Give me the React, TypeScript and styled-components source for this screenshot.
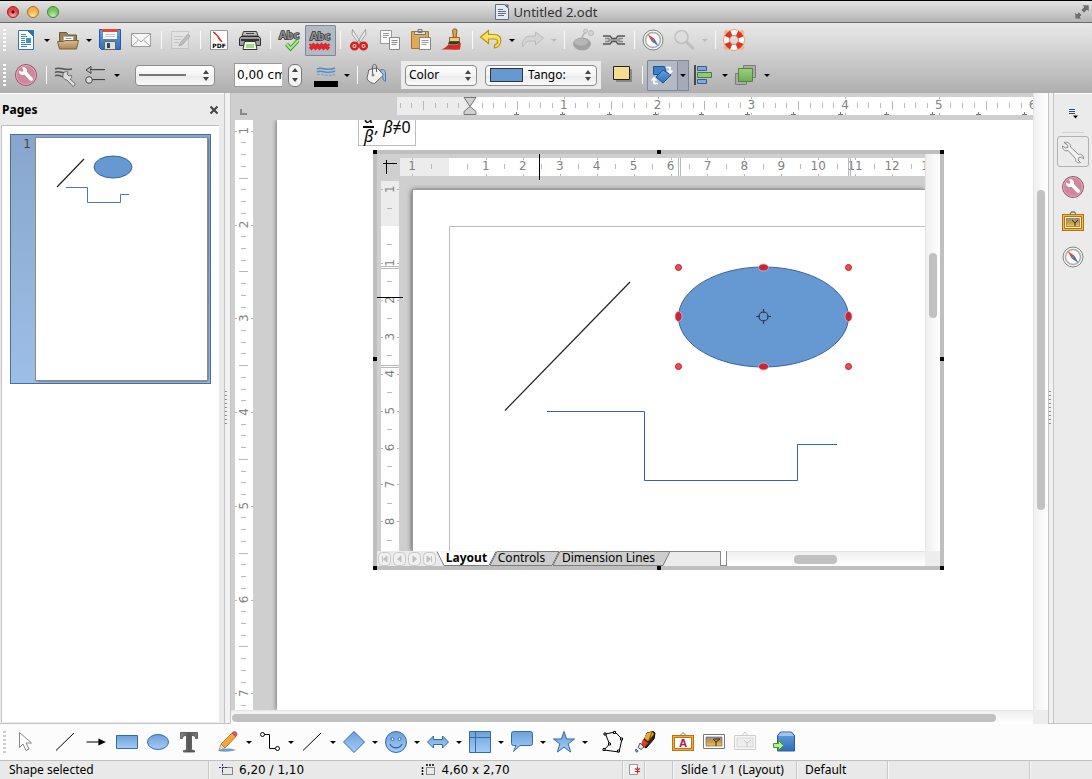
import React from 'react';
import styled, { createGlobalStyle, css } from 'styled-components';

const UI = '"Noto Sans", "Open Sans", sans-serif';
const NUM = '"DejaVu Sans", "Noto Sans", sans-serif';

const GlobalStyle = createGlobalStyle`
  * { box-sizing: border-box; }
  body { margin: 0; font-family: ${UI}; font-size: 12px; color: #000; background: #ebebeb; }
  button, input, select { font: inherit; color: inherit; margin: 0; }
`;

/* ---------- window frame ---------- */

const Window = styled.div`
  height: 100vh;
  display: flex;
  flex-direction: column;
  overflow: hidden;
`;

const TitleBar = styled.header`
  flex: none;
  height: 23px;
  display: grid;
  grid-template-columns: 1fr auto 1fr;
  align-items: center;
  padding: 0 3px;
  border-top: 1px solid #000;
  border-bottom: 1px solid #6a6a6a;
  background: linear-gradient(#e4e4e4, #b4b4b4);
`;

const Lights = styled.div`
  display: flex;
  gap: 8px;
  padding-left: 4px;
`;

const Light = styled.button<{ $tone: string; $edge: string; $dot?: boolean }>`
  width: 12px;
  height: 12px;
  padding: 0;
  border: 1px solid ${p => p.$edge};
  border-radius: 50%;
  background: ${p => (p.$dot ? 'radial-gradient(circle at 50% 50%, #400 0 1px, transparent 2px), ' : '')}
    radial-gradient(circle at 50% 90%, #fff9 0, transparent 60%), ${p => p.$tone};
`;

const Title = styled.h1`
  display: flex;
  align-items: center;
  gap: 5px;
  margin: 0;
  font-size: 13px;
  line-height: 20px;
  font-weight: 400;
  color: #333;
`;

const Expand = styled.button`
  justify-self: end;
  width: 14px;
  height: 14px;
  padding: 0;
  border: 0;
  background: none;
  display: flex;
`;

const Toolbars = styled.div`
  flex: none;
  background: linear-gradient(#e9e9e9, #afafaf);
`;

const Row = styled.div<{ $height: number }>`
  height: ${p => p.$height}px;
  display: flex;
  align-items: center;
`;

const Grip = styled.span<{ $tone?: string }>`
  flex: none;
  width: 3px;
  height: 22px;
  margin: 0 5px 0 3px;
  background: repeating-linear-gradient(${p => p.$tone ?? '#fff'} 0 2px, transparent 2px 4px);
`;

const Tool = styled.button<{ $pressed?: boolean }>`
  flex: none;
  width: 31px;
  height: 31px;
  padding: 0 1px 0 0;
  border: 1px solid ${p => (p.$pressed ? '#7d8797' : 'transparent')};
  border-radius: 1px;
  background: ${p => (p.$pressed ? '#b3bac6' : 'none')};
  display: flex;
  align-items: center;
  justify-content: center;
`;

const Drop = styled.button<{ $pressed?: boolean; $faded?: boolean }>`
  flex: none;
  width: 11px;
  height: 31px;
  padding: 0;
  border: 1px solid ${p => (p.$pressed ? '#7d8797' : 'transparent')};
  border-left: 0;
  background: ${p => (p.$pressed ? '#a3abba' : 'none')};
  display: flex;
  align-items: center;
  justify-content: center;
  &::after {
    content: '';
    border: 3px solid transparent;
    border-top-color: ${p => (p.$faded ? '#bbb' : '#000')};
    border-bottom: 0;
  }
`;

const Sep = styled.span`
  flex: none;
  width: 8px;
  height: 18px;
  display: flex;
  justify-content: center;
  &::before { content: ''; width: 1px; background: #fafafa; }
`;

const Gap = styled.span<{ $size: number }>`
  flex: none;
  width: ${p => p.$size}px;
`;

const SelectWrap = styled.span<{ $width: number }>`
  position: relative;
  flex: none;
  width: ${p => p.$width}px;
  height: 21px;
  display: flex;
  &::before, &::after {
    content: '';
    position: absolute;
    right: 6px;
    border: 3px solid transparent;
    pointer-events: none;
  }
  &::before { top: 5px; border-bottom: 4px solid #444; border-top: 0; }
  &::after { bottom: 5px; border-top: 4px solid #444; border-bottom: 0; }
`;

const Select = styled.select<{ $indent?: number }>`
  appearance: none;
  width: 100%;
  height: 100%;
  padding: 0 16px 0 ${p => p.$indent ?? 3}px;
  border: 1px solid #8c8c8c;
  border-radius: 4px;
  background: linear-gradient(#fff, #f3f3f3 50%, #e9e9e9 50%, #fafafa);
  font-size: 12px;
  line-height: 16px;
`;

const LinePreview = styled.i`
  position: absolute;
  left: 4px;
  top: 9px;
  width: 47px;
  height: 2px;
  background: #777;
  pointer-events: none;
`;

const Swatch = styled.i`
  position: absolute;
  left: 5px;
  top: 3px;
  width: 33px;
  height: 14px;
  border: 1px solid #333;
  background: #6499d1;
  pointer-events: none;
`;

const WidthInput = styled.input`
  flex: none;
  width: 48px;
  height: 24px;
  padding: 0 0 0 2px;
  border: 1px solid #9a9a9a;
  border-right: 0;
  border-radius: 0;
  background: #fff;
  font-family: ${NUM};
`;

const Stepper = styled.span`
  flex: none;
  width: 14px;
  height: 23px;
  margin-left: 6px;
  border: 1px solid #777;
  border-radius: 6px;
  background: #f4f4f4;
  display: flex;
  flex-direction: column;
`;

const Step = styled.button<{ $down?: boolean }>`
  flex: 1;
  padding: 0;
  border: 0;
  background: none;
  display: flex;
  align-items: center;
  justify-content: center;
  &::after {
    content: '';
    border: 3px solid transparent;
    ${p => (p.$down
    ? css`border-top: 4px solid #444; border-bottom: 0;`
    : css`border-bottom: 4px solid #444; border-top: 0;`)}
  }
`;

const FillGroup = styled.span`
  flex: none;
  height: 28px;
  margin: 0 6px 0 9px;
  padding: 0 4px;
  display: flex;
  align-items: center;
  gap: 8px;
  background: #ebebeb;
`;

/* ---------- main area ---------- */

const Main = styled.main`
  flex: 1;
  min-height: 0;
  display: grid;
  grid-template-columns: 224px 7px minmax(0, 1fr) 6px 38px;
`;

const PagesPanel = styled.aside`
  display: flex;
  flex-direction: column;
  background: #ebebeb;
  border-top: 1px solid #fff;
  border-bottom: 1px solid #c4c4c4;
`;

const PanelHead = styled.div`
  display: flex;
  align-items: center;
  justify-content: space-between;
  height: 31px;
  padding: 0 5px 0 2px;
`;

const PanelTitle = styled.h2`
  margin: 0;
  font-size: 12px;
  line-height: 16px;
  font-weight: 700;
`;

const PanelClose = styled.button`
  width: 10px;
  height: 10px;
  padding: 0;
  border: 0;
  background: none;
  display: flex;
`;

const PageList = styled.div`
  flex: 1;
  margin: 0 5px 1px 1px;
  padding: 8px;
  border: solid #c0c0c0;
  border-width: 1px 0 0 1px;
  background: #fff;
`;

const PageItem = styled.button`
  width: 201px;
  height: 250px;
  padding: 3px 3px 3px 0;
  border: 1px solid #45709f;
  background: linear-gradient(#88a6cd, #9dbee7);
  display: grid;
  grid-template-columns: 25px 1fr;
  align-items: start;
  text-align: right;
`;

const PageNumber = styled.span`
  padding-right: 5px;
  font: 12px/12px ${NUM};
  color: #444;
`;

const Thumb = styled.svg`
  width: 100%;
  height: 242px;
  background: #fff;
  box-shadow: 0 0 0 1px #8b8b8b, 1px 1px 2px #333;
`;

const Splitter = styled.div`
  border: solid #c4c4c4;
  border-width: 0 1px 1px 1px;
  background: #f2f2f2;
  display: flex;
  align-items: center;
  &::after {
    content: '';
    width: 2px;
    height: 34px;
    background: repeating-linear-gradient(#888 0 1px, transparent 1px 4px);
  }
`;

const Editor = styled.section`
  display: grid;
  grid-template-columns: 22px minmax(0, 1fr) 15px;
  grid-template-rows: 27px minmax(0, 1fr) 14px;
  background: #cfcfcf;
`;

const Corner = styled.div`
  padding: 10px 0 0 9px;
`;

const TopRulerCell = styled.div`
  padding: 4px 0 0 144px;
`;

const SideRulerCell = styled.div`
  padding-left: 4px;
`;

const Strip = styled.div<{ $vertical?: boolean }>`
  position: relative;
  ${p => (p.$vertical ? 'width: 18px; height: 100%;' : 'height: 18px; width: 100%;')}
  background: #fff;
  overflow: hidden;
`;

const StripSvg = styled.svg`
  display: block;
  width: 100%;
  height: 100%;
`;

const ScrollV = styled.div`
  grid-column: 3;
  grid-row: 1 / 3;
  display: flex;
  flex-direction: column;
  padding: 0 3px;
  border-left: 1px solid #e4e4e4;
  background: linear-gradient(to right, #f0f0f0, #fff);
`;

const ScrollH = styled.div`
  display: flex;
  padding: 3px 0 2px;
  border-top: 1px solid #e4e4e4;
  background: linear-gradient(#f0f0f0, #fff);
`;

const EditorScrollH = styled(ScrollH)`
  grid-column: 1 / 3;
`;

const InnerScrollH = styled(ScrollH)`
  flex: 1;
`;

const Room = styled.span<{ $share: number }>`
  flex: ${p => p.$share} 1 0;
`;

const ThumbBar = styled(Room)`
  border-radius: 4px;
  background: #c1c1c1;
`;

const ScrollCorner = styled.div`
  background: #ededed;
`;

const Desk = styled.div`
  padding-left: 24px;
  overflow: hidden;
`;

const Paper = styled.article`
  position: relative;
  height: 100%;
  background: #fff;
  box-shadow: 0 0 5px #555;
`;

const Formula = styled.div`
  position: absolute;
  left: 81px;
  top: -12px;
  width: 58px;
  height: 38px;
  padding-left: 4px;
  display: flex;
  align-items: center;
  border: 1px solid #bcbcbc;
  font-size: 16px;
  line-height: 17px;
  font-style: italic;
`;

const Fraction = styled.span`
  display: flex;
  flex-direction: column;
  width: 11px;
  margin-right: 1px;
  text-align: center;
  & > :first-child { border-bottom: 2px solid #000; }
`;

const Upright = styled.span`
  font-style: normal;
`;

const Embedded = styled.div`
  position: absolute;
  left: 96px;
  top: 30px;
  width: 571px;
  height: 420px;
  border: 4px solid #bfbfbf;
  display: grid;
  grid-template-columns: 23px minmax(0, 1fr) 15px;
  grid-template-rows: 26px minmax(0, 1fr) 15px;
  background: #cfcfcf;
`;

const Knob = styled.i<{ $x: string; $y: string }>`
  position: absolute;
  width: 4px;
  height: 4px;
  background: #000;
  ${p => ({ start: 'left: -4px;', mid: 'left: calc(50% - 2px);', end: 'right: -4px;' } as Record<string, string>)[p.$x]}
  ${p => ({ start: 'top: -4px;', mid: 'top: calc(50% - 3px);', end: 'bottom: -4px;' } as Record<string, string>)[p.$y]}
`;

const InnerTop = styled.div`
  position: relative;
  padding-top: 4px;
`;

const InnerSide = styled.div`
  position: relative;
  padding: 1px 1px 0 4px;
`;

const Cursor = styled.i<{ $vertical?: boolean }>`
  position: absolute;
  background: #000;
  ${p => (p.$vertical
    ? 'left: 139px; top: 0; width: 1px; height: 26px;'
    : 'top: 117px; left: 0; height: 1px; width: 26px;')}
`;

const InnerDesk = styled.div`
  padding: 10px 0 0 13px;
  overflow: hidden;
`;

const InnerPage = styled.svg`
  display: block;
  width: 100%;
  height: 100%;
  background: #fff;
  box-shadow: 0 0 0 1px #9a9a9a, -1px 0 5px #444;
`;

const TabRow = styled.div`
  grid-column: 1 / 3;
  display: flex;
  background: #ebebeb;
`;

const NavButton = styled.button`
  flex: none;
  width: 15px;
  height: 15px;
  padding: 0;
  border: 0;
  background: none;
  display: flex;
`;

const Tab = styled.button<{ $width: number; $active?: boolean }>`
  position: relative;
  flex: none;
  width: ${p => p.$width}px;
  height: 15px;
  margin-left: ${p => (p.$active ? 0 : -6)}px;
  padding: 0 ${p => (p.$active ? 0 : 6)}px 2px 0;
  border: 0;
  background: none;
  line-height: 13px;
  white-space: nowrap;
  font-weight: ${p => (p.$active ? 700 : 400)};
  z-index: ${p => (p.$active ? 1 : 0)};
`;

const TabShape = styled.svg`
  position: absolute;
  inset: 0;
`;

const TabLabel = styled.span`
  position: relative;
`;

const TabFiller = styled.span`
  flex: none;
  width: 57px;
  margin-left: -6px;
  border: solid #888;
  border-width: 1px 1px 0 0;
`;

const TabSash = styled.span`
  flex: none;
  width: 6px;
  border: solid #888;
  border-width: 0 1px 1px 0;
  background: #fff;
`;

const SideBar = styled.nav`
  display: flex;
  flex-direction: column;
  align-items: center;
  gap: 4px;
  padding-top: 3px;
  background: #ebebeb;
  border-top: 1px solid #fff;
  border-bottom: 1px solid #c4c4c4;
`;

const SideRule = styled.hr`
  width: 22px;
  height: 1px;
  margin: 0 0 -1px;
  border: 0;
  background: #d0d0d0;
`;

const SideTool = styled(Tool)<{ $framed?: boolean }>`
  width: 32px;
  padding: 0;
  border-color: ${p => (p.$framed ? '#b0b0b0' : 'transparent')};
  border-radius: 3px;
`;

const DrawBar = styled(Row)`
  flex: none;
  background: #fcfcfc;
`;

const Status = styled.footer`
  flex: none;
  height: 19px;
  display: grid;
  grid-template-columns: 208px minmax(0, 1fr) 22px 28px 124px 91px 142px 63px;
  border-top: 1px solid #c0c0c0;
  background: #e9e9e9;
  line-height: 18px;
`;

const Cell = styled.div<{ $pad?: number }>`
  display: flex;
  align-items: center;
  padding-left: ${p => p.$pad ?? 8}px;
  border-left: 1px solid #c8c8c8;
  box-shadow: inset 1px 0 0 #f6f6f6;
  white-space: nowrap;
  &:first-child { border-left: 0; padding-left: 9px; box-shadow: none; }
`;

const Measures = styled(Cell)`
  display: grid;
  grid-template-columns: 1fr 1fr;
  font-family: ${NUM};
`;

const Measure = styled.span`
  display: flex;
  align-items: center;
  gap: 6px;
`;

/* ---------- drawings ---------- */

const DefsSvg = styled.svg`
  position: absolute;
`;

const Defs = () => (
  <DefsSvg width="0" height="0" aria-hidden="true">
    <defs>
      <linearGradient id="blue" x1="0" y1="0" x2="0" y2="1">
        <stop offset="0" stopColor="#6ba0dc" /><stop offset="1" stopColor="#a5cdf5" />
      </linearGradient>
      <linearGradient id="deep" x1="0" y1="0" x2="0" y2="1">
        <stop offset="0" stopColor="#63a0e0" /><stop offset="1" stopColor="#2e70b8" />
      </linearGradient>
      <linearGradient id="tan" x1="0" y1="0" x2="0" y2="1">
        <stop offset="0" stopColor="#d9be92" /><stop offset="1" stopColor="#a98752" />
      </linearGradient>
      <linearGradient id="green" x1="0" y1="0" x2="0" y2="1">
        <stop offset="0" stopColor="#9bd07c" /><stop offset="1" stopColor="#6fae50" />
      </linearGradient>
      <linearGradient id="sunset" x1="0" y1="0" x2="0" y2="1">
        <stop offset="0" stopColor="#8d959c" /><stop offset=".5" stopColor="#c39a50" /><stop offset="1" stopColor="#ffc03c" />
      </linearGradient>
      <linearGradient id="steel" x1="0" y1="0" x2="1" y2="0">
        <stop offset="0" stopColor="#8a8a8a" /><stop offset=".5" stopColor="#555" /><stop offset="1" stopColor="#7a7a7a" />
      </linearGradient>
    </defs>
  </DefsSvg>
);

const blueShape = { fill: 'url(#blue)', stroke: '#346ba6', strokeWidth: 1 };

const wrench = 'M5 7.5 L8.2 9 L9.6 7.6 L8 4.6 C10.5 3.6 13.6 5.4 13 9 L18.6 15 C20 16.6 17.8 19 16 17.6 L10.6 11.8 C7.2 12.8 4.4 10.6 5 7.5Z';

const compass = (
  <>
    <circle cx="12" cy="12" r="10" fill="#f4f4f4" stroke="#7e857f" />
    <circle cx="12" cy="12" r="7.500" fill="#fdfdfd" stroke="#a6ada7" strokeWidth="1.500" />
    <path d="M6.500 6L13.500 10.800 10.700 13.400z" fill="#e2453a" />
    <path d="M17.500 18L10.700 13.400 13.500 10.800z" fill="#4a71a8" />
  </>
);

const abc = (
  <text x="12" y="11" textAnchor="middle" fontFamily="Noto Sans" fontWeight="700" fontSize="11"
    fill="#8e8e8e" stroke="#2e2e2e" strokeWidth="1.500" paintOrder="stroke">Abc</text>
);

const icons: Record<string, React.ReactNode> = {
  writer: (
    <>
      <path d="M4.500 2.500h11l4 4v15h-15z" fill="#fff" stroke="#2c79a6" />
      <path d="M13.500 2.500h6v6z" fill="#2c79a6" stroke="#2c79a6" />
      <path d="M7 6.500h5M7 8.500h6M7 10.500h4M7 12.500h4M7 14.500h4M7 16.500h10M7 18.500h6" stroke="#3c8cba" fill="none" />
      <path d="M12 10h5v5h-5z" fill="#3b93c8" />
    </>
  ),
  open: (
    <>
      <path d="M3.500 19V4.500h7l2 2.500h8v12z" fill="#9b8158" stroke="#6e5731" />
      <path d="M7.500 8.500h10v7h-10z" fill="#fff" stroke="#aaa" />
      <path d="M9.500 10.500h6" stroke="#999" />
      <path d="M1.500 13.500h6l1.500-1h13.500l-2 8.500h-17z" fill="url(#tan)" stroke="#7c6237" />
    </>
  ),
  save: (
    <>
      <path d="M1.500 1.500h21v20h-19l-2-2z" fill="url(#deep)" stroke="#29589a" />
      <path d="M5 2h14v9H5z" fill="#fff" /><path d="M4 1h16v3H4z" fill="#e2493b" />
      <path d="M7 6.500h10M7 8.500h10" stroke="#c3c3c3" />
      <path d="M6.500 13.500h11v8h-11z" fill="#ddd" stroke="#666" /><path d="M9 15h3v5H9z" fill="#33475e" />
    </>
  ),
  mail: (
    <>
      <path d="M2.500 5.500h19v13h-19z" fill="#f7f7f7" stroke="#9a9a9a" />
      <path d="M3 6l9 8 9-8M3 18l6.500-6M21 18l-6.500-6" fill="none" stroke="#aaa" />
    </>
  ),
  edit: (
    <g opacity=".45">
      <path d="M3.500 3.500h17v17h-17z" fill="#e8e8e8" stroke="#aaa" />
      <path d="M6 8.500h9M6 11.500h7M6 14.500h5" stroke="#aaa" />
      <path d="M11 18l1.500-3.500L20 6l2 2-7.500 8.500z" fill="#999" stroke="#777" />
    </g>
  ),
  pdf: (
    <>
      <path d="M3.500 2.500h17v19h-17z" fill="#fff" stroke="#999" />
      <path d="M6 4c3 .5 5 4 9 9.500-3-1-3-2-4.500-5.500C9 7 7.500 5.500 6 4z" fill="#e8261c" stroke="#e8261c" />
      <text x="12" y="20" textAnchor="middle" fontFamily="DejaVu Sans" fontWeight="700" fontSize="6">PDF</text>
    </>
  ),
  print: (
    <>
      <path d="M5.500 3.500h13l1.500 4.500H4z" fill="#bdbdbd" stroke="#3a3a3a" />
      <path d="M8 5.500h8" stroke="#444" />
      <path d="M3 8.500h18l1.500 2v7h-21v-7z" fill="#9c9c9c" stroke="#2c2c2c" />
      <path d="M3 11h18v2H3z" fill="#333" />
      <path d="M6.500 13.500h11l1.500 8h-14z" fill="#eef7e8" stroke="#333" /><path d="M8 16h8v4H8z" fill="#a3d890" />
    </>
  ),
  spell: (
    <>
      {abc}
      <path d="M9.500 16l4 4.500 7.500-8" fill="none" stroke="#3c9a26" strokeWidth="4" />
      <path d="M9.500 16l4 4.500 7.500-8" fill="none" stroke="#a6ec85" strokeWidth="2" />
    </>
  ),
  autospell: (
    <g transform="translate(0 1)">
      {abc}
      <path d="M1.500 15l2 2 2-2 2 2 2-2 2 2 2-2 2 2 2-2 2 2 2-2M1.500 18l2 2 2-2 2 2 2-2 2 2 2-2 2 2 2-2 2 2 2-2" fill="none" stroke="#df2626" strokeWidth="2" />
    </g>
  ),
  cut: (
    <>
      <path d="M5.500 1.500L14 15l-1.500 1.500L5 6zM18.500 1.500L10 15l1.500 1.500L19 6z" fill="#f0f0f0" stroke="#8a8a8a" strokeWidth=".8" />
      <ellipse cx="7.500" cy="18" rx="3.300" ry="3.300" fill="none" stroke="#d5201d" strokeWidth="2.500" />
      <ellipse cx="16.500" cy="18" rx="3.300" ry="3.300" fill="none" stroke="#d5201d" strokeWidth="2.500" />
      <circle cx="7.500" cy="18" r="1" fill="#d5201d" /><circle cx="16.500" cy="18" r="1" fill="#d5201d" />
    </>
  ),
  copy: (
    <>
      <path d="M2.500 2.500h11v13h-11z" fill="#fbfbfb" stroke="#999" /><path d="M5 5.500h6M5 7.500h6M5 9.500h4" stroke="#999" />
      <path d="M11.500 9.500h10v12h-10z" fill="#fbfbfb" stroke="#888" /><path d="M13.500 12.500h6M13.500 14.500h6M13.500 16.500h5" stroke="#888" />
    </>
  ),
  paste: (
    <>
      <path d="M2.500 3.500h17v17h-17z" fill="#e0a956" stroke="#a4732a" />
      <path d="M5.500 3.500h11v3h-11zM9 1.500h4v3H9z" fill="#ddd" stroke="#777" />
      <path d="M10.500 9.500h11v12h-11z" fill="#fff" stroke="#888" /><path d="M12.500 12.500h7M12.500 14.500h7M12.500 16.500h5" stroke="#999" />
    </>
  ),
  brush: (
    <>
      <path d="M8 17c4 0 8 0 13-2l-1 6.500c-6 .5-12 0-19 0 3-1 5-2 7-4.500z" fill="#d92a22" />
      <path d="M12.500 2c1-1.500 4-1.500 4.500 0l-1 8h-2.500z" fill="#dca24c" stroke="#8a5d1c" />
      <path d="M9.500 9.500h10v4h-10z" fill="#f2cc74" stroke="#8a6a2c" />
      <path d="M9 13.500h11v2c-4 1-8 1-12 1z" fill="#353535" />
    </>
  ),
  undo: (
    <path d="M1.500 9L9.500 2.500v4h6c9 0 8 12 0 13.500v-3c5-2 3.500-6 0-6h-6v4.500z" fill="#fbe066" stroke="#b8930a" strokeWidth="1.200" />
  ),
  redo: (
    <path d="M22.500 10L14.500 4v4h-5c-7 0-9 7-8 11 2-4 4-6 8-6h5v4z" fill="#d4d4d4" stroke="#bababa" />
  ),
  ball: (
    <>
      <ellipse cx="11" cy="16" rx="9" ry="6.500" fill="#a2a2a2" /><ellipse cx="10" cy="14" rx="7" ry="3.500" fill="#b7b7b7" />
      <path d="M11 10c1-4 2-5 4-6" fill="none" stroke="#b4b4b4" strokeWidth="1.500" />
      <circle cx="20" cy="5" r="2.500" fill="#d4d4d4" stroke="#bbb" /><circle cx="14.500" cy="3" r="2" fill="#d4d4d4" stroke="#bbb" />
    </>
  ),
  chain: (
    <>
      <path d="M1 8h7l2 2.500h4L16 8h7M1 16h7l2-2.500h4l2 2.500h7" fill="none" stroke="#555" strokeWidth="1.500" />
      <path d="M3 10.500h4v3H3M21 10.500h-4v3h4M8 12h8" fill="none" stroke="#888" strokeWidth="1.500" />
    </>
  ),
  compass,
  find: (
    <g opacity=".55">
      <circle cx="9.500" cy="9" r="6.500" fill="#ddd" stroke="#aaa" strokeWidth="1.500" />
      <path d="M14.500 14l6 6" stroke="#aaa" strokeWidth="3" strokeLinecap="round" />
    </g>
  ),
  help: (
    <>
      <path d="M2 5l3-3M22 5l-3-3M2 19l3 3M22 19l-3 3" stroke="#eeb87c" strokeWidth="2" />
      <circle cx="12" cy="12" r="7.500" fill="none" stroke="#fdfdfd" strokeWidth="6" />
      <circle cx="12" cy="12" r="7.500" fill="none" stroke="#df3227" strokeWidth="6" strokeDasharray="5.900 5.880" strokeDashoffset="-2.900" />
      <circle cx="12" cy="12" r="10.500" fill="none" stroke="#e9a36b" /><circle cx="12" cy="12" r="4.500" fill="none" stroke="#d87e58" />
    </>
  ),
  badge: (
    <>
      <circle cx="12" cy="12" r="10.500" fill="#d0879e" stroke="#93566a" />
      <circle cx="12" cy="12" r="9.500" fill="none" stroke="#e0a9ba" />
      <path d={wrench} fill="#fff" />
    </>
  ),
  lineStyle: (
    <>
      <path d="M2 6c5-3 9 2 17 0M2 9.500c4-2 7 1 10 0M2 13c3-2 5 0 8 1" fill="none" stroke="#555" strokeWidth="1.500" />
      <path d="M10 12c0-3 3-4 5-3l-1 2 2 2 2-1c2 3-1 4-1 4l5 4.500c0 3-2 3-3 2l-5-5.500c-2 0-5-2-4-5z" fill="#ddd" stroke="#555" strokeWidth=".8" />
    </>
  ),
  lineEnds: (
    <>
      <path d="M2 7l5-3.500v7z" fill="#bbb" stroke="#444" />
      <path d="M6 6.500h15M8 16.500h13" stroke="#444" />
      <path d="M7 7.500h14M8 17.500h13" stroke="#aaa" />
      <circle cx="5" cy="17" r="3.300" fill="#ddd" stroke="#444" />
    </>
  ),
  lineColor: (
    <>
      <path d="M3 6c5-3 9 3 18-1M3 9c5-3 9 3 18-1" fill="none" stroke="#4f8cc8" strokeWidth="1.600" />
      <path d="M3 12c5-3 9 3 18-1" fill="none" stroke="#78a7d6" strokeWidth="1.400" strokeDasharray="3 1" />
      <path d="M0 18h24v6H0z" />
    </>
  ),
  bucket: (
    <>
      <path d="M16 7c4-1 5.500 0 5.500 4v7c-2 0-2.500-1-2.500-3z" fill="#9dbde2" stroke="#4472b0" />
      <path d="M5 6.500L13.500 5l6 7-9 8.500c-3 0-7.500-3-7.500-5.500z" fill="#f1f1f1" stroke="#666" />
      <path d="M8.500 12V4c0-3.500 4-3.500 4 0v5" fill="none" stroke="#666" /><circle cx="9" cy="12" r="1.500" fill="#888" />
    </>
  ),
  shadow: (
    <>
      <path d="M6 6h16v13H6z" fill="#666" opacity=".6" />
      <path d="M3.500 3.500h16v13h-16z" fill="#f5dc8e" stroke="#222" />
    </>
  ),
  rotate: (
    <>
      <path d="M3.500 3.500h11l2 8h-13z" fill="#3f7fc5" stroke="#1d5492" />
      <path d="M13 7l8 5-8 8-7-6z" fill="url(#deep)" stroke="#1d5492" />
      <path d="M16 4.500h4V9M17.500 7.500L20 10l2.500-2.500M8 20.500H4V16M1.500 17.500L4 15l2.500 2.500" fill="none" stroke="#fff" strokeWidth="1.600" />
    </>
  ),
  align: (
    <>
      <path d="M3 2v20" stroke="#222" strokeWidth="1.500" />
      <path d="M5.500 3.500h9v4h-9zM5.500 16.500h9v4h-9z" fill="#7baade" stroke="#345f94" />
      <path d="M5.500 9.500h14v5h-14z" fill="#8ccb75" stroke="#4c7d38" />
    </>
  ),
  arrange: (
    <>
      <path d="M9.500 2.500h12v12h-12zM1.500 10.500h11v11h-11z" fill="#a9a9a9" stroke="#7c7c7c" />
      <path d="M4.500 5.500h14v13h-14z" fill="url(#green)" stroke="#4a8a35" />
    </>
  ),
  pointer: <path d="M5.500 2.500v15l3.500-3.500 3 6.500 3-1.500-3-6h5.500z" fill="#fdfdfd" stroke="#888" />,
  line: <path d="M3 20.500L21 3" stroke="#000" strokeWidth="1" />,
  arrow: <path d="M2.500 12h13M15 9.500l5.500 2.500-5.500 2.500z" stroke="#000" strokeWidth="1.200" />,
  rect: <path d="M1.500 5.500h21v13h-21z" {...blueShape} />,
  ellipse: <ellipse cx="12" cy="12" rx="10.500" ry="7.500" {...blueShape} />,
  text: <path d="M3.500 2.500h17v6h-2c0-2-1-3-4-3v13c0 1.500 1 2 3 2v1.500h-11v-1.500c2 0 3-.5 3-2v-13c-3 0-4 1-4 3h-2z" fill="url(#steel)" stroke="#4a4a4a" strokeWidth=".8" />,
  pencil: (
    <>
      <path d="M2 21c6-3 10-3 18-1-6 2-12 2-18 1z" fill="#6c9fd8" />
      <path d="M5 14L16 3l4 3.500L9 18z" fill="#f6a63a" stroke="#a9681a" strokeWidth=".8" />
      <path d="M16 3l2-1.500c2 0 3.500 1.500 3 3.500l-1.500 1.500z" fill="#e15a5a" stroke="#9c3636" strokeWidth=".6" />
      <path d="M5 14l4 4-6 2.500z" fill="#f5dfb8" stroke="#84663a" strokeWidth=".6" />
    </>
  ),
  connector: (
    <>
      <path d="M6 4.500h5.500v14h6" fill="none" stroke="#000" />
      <circle cx="4.500" cy="4.500" r="2" fill="#fff" stroke="#000" /><circle cx="19.500" cy="18.500" r="2" fill="#fff" stroke="#000" />
    </>
  ),
  diamond: <path d="M12 1.500L22.500 12 12 22.500 1.500 12z" {...blueShape} />,
  smiley: (
    <>
      <circle cx="12" cy="12" r="10.500" {...blueShape} />
      <circle cx="8.500" cy="9" r="1.500" fill="#fff" stroke="#346ba6" /><circle cx="15.500" cy="9" r="1.500" fill="#fff" stroke="#346ba6" />
      <path d="M6 14c2 5 10 5 12 0" fill="none" stroke="#346ba6" strokeWidth="1.300" />
    </>
  ),
  dblArrow: <path d="M1.500 12L7.500 6v3.500h9V6l6 6-6 6v-3.500h-9V18z" {...blueShape} />,
  flow: <><path d="M1.500 1.500h21v21h-21z" {...blueShape} /><path d="M7.500 1.500v21M1.500 7.500h21" stroke="#346ba6" /></>,
  callout: <path d="M3.500 1.500h17q2 0 2 2v10q0 2-2 2H10L3.500 21.500 6 15.500H3.500q-2 0-2-2v-10q0-2 2-2z" {...blueShape} />,
  star: <path d="M12 1.500l2.600 7.500h8l-6.400 4.800 2.400 8.200L12 17.200 5.400 22l2.400-8.200L1.400 9h8z" {...blueShape} />,
  points: (
    <>
      <path d="M4.500 4L14 2l7 7-3 13-15-2 5.500-6z" fill="none" stroke="#000" />
      {[[4, 4], [13.5, 2.5], [20.5, 9], [17.5, 21], [3, 19.5], [8.5, 14]].map(([x, y]) => (
        <path key={x} d={`M${x - 1} ${y - 1}h2v2h-2z`} fill="#fff" stroke="#000" />
      ))}
    </>
  ),
  glue: (
    <g transform="translate(3 0)">
      <path d="M12 3l6-1.500 2 1.500-1 6-8 9-4-3z" fill="#3a2a14" stroke="#000" />
      <path d="M12 3l5-1.500 2 2.500-6 7-4-3z" fill="#f0a52c" /><path d="M17 2l-3 8" stroke="#7b4d08" />
      <path d="M8 9l5 4-4 5-3-3.500z" fill="#e23b2c" />
      <path d="M5 13l4 4-3 2.500-3-2z" fill="#e4e4e4" stroke="#333" strokeWidth=".8" />
      <path d="M1 19c-2 3 2 4 2 2z" fill="#6fa1dc" stroke="#2f5f9a" />
    </g>
  ),
  fontwork: (
    <>
      <path d="M9 5.500l3-3 3 3" fill="none" stroke="#777" />
      <path d="M2.500 6.500h19v13h-19z" fill="#fff" stroke="#a8620a" strokeWidth="3" /><path d="M2.500 6.500h19v13h-19z" fill="none" stroke="#f3ac3a" strokeWidth="1.500" />
      <text x="12" y="17" textAnchor="middle" fontFamily="DejaVu Sans" fontWeight="700" fontSize="10" fill="#b31d4f">A</text>
    </>
  ),
  image: (
    <>
      <path d="M1.500 4.500h21v14h-21z" fill="#fff" stroke="#777" /><path d="M4 7h16v9H4z" fill="url(#sunset)" stroke="#555" strokeWidth=".6" />
      <path d="M14 16v-4l-3-3M14 12l4-3M12 9h6" fill="none" stroke="#3a2c16" />
    </>
  ),
  imageOff: (
    <g opacity=".45">
      <path d="M9 5l3-3 3 3M1.500 5.500h21v14h-21z" fill="#f0f0f0" stroke="#999" /><path d="M4 8h16v9H4z" fill="#ddd" stroke="#aaa" />
      <path d="M14 17v-4l-3-3M14 13l4-3" fill="none" stroke="#888" />
    </g>
  ),
  extrude: (
    <>
      <path d="M5.500 5.500l3-3.500h11l3 3.500v15.500h-17z" fill="url(#deep)" stroke="#2a5e9a" />
      <path d="M6 6l3-3.500h10L22 6z" fill="#9cc6f0" />
      <path d="M1.500 13.500h5V10.500l5 5-5 5v-3h-5z" fill="#b5ef8f" stroke="#46991f" />
    </>
  ),
  gallery: (
    <>
      <path d="M8.500 5l2-3h3l2 3" fill="none" stroke="#777" strokeWidth="1.300" />
      <path d="M2.500 5.500h19v14h-19z" fill="#fbeccb" stroke="#9a600c" strokeWidth="3" />
      <path d="M2.500 5.500h19v14h-19z" fill="none" stroke="#f6b541" strokeWidth="1.500" />
      <path d="M5.500 8.500h13v8h-13z" fill="url(#sunset)" stroke="#8a6222" strokeWidth=".6" />
      <path d="M14 16v-3l-3-3M14 13l3-3" fill="none" stroke="#3a2c16" />
    </>
  ),
  spanner: (
    <path d="M3 2.500l3.500 2.500.5 2.500-2.500.5L1.500 6c0 4 3 5.500 5.500 4.500l7.500 8c-.5 3 2 5 5 4l-2.500-2.500 1-2.500 2.500-.5 2 2c.5-3-2-5.500-5-4.500L9.500 7C10 3.500 6.500 1.500 3 2.500z" fill="#f2f2f2" stroke="#8c8c8c" />
  ),
  menu: (
    <>
      <path d="M8 8.500h6M8 10.500h6M8 12.500h6" stroke="#31506e" />
      <path d="M12 14.500h5l-2.500 3z" />
    </>
  ),
};

const Icon = ({ name }: { name: string }) => (
  <svg width="24" height="24" viewBox="0 0 24 24" aria-hidden="true">{icons[name]}</svg>
);

/* ---------- rulers ---------- */

type RulerProps = {
  vertical?: boolean;
  origin: number;
  unit: number;
  parts: number;
  from: number;
  to: number;
  margin?: number;
  guides?: number[];
  stops?: boolean;
};

function Ruler({ vertical, origin, unit, parts, from, to, margin = 0, guides = [], stops }: RulerProps) {
  const marks: React.ReactNode[] = [];
  const seg = (key: string, at: number, a: number, b: number, color = '#b8b8b8') => {
    const p = Math.round(at) + 0.5;
    marks.push(
      vertical
        ? <path key={key} d={`M${a} ${p}H${b}`} stroke={color} />
        : <path key={key} d={`M${p} ${a}V${b}`} stroke={color} />,
    );
  };
  for (let i = from * parts; i <= to * parts; i += 1) {
    const at = origin + (i * unit) / parts;
    if (i % parts !== 0) {
      const half = parts > 2 && Math.abs(i % parts) === parts / 2;
      seg(`t${i}`, at, half ? 4 : 6, half ? 13 : 11);
    } else if (i !== 0) {
      seg(`a${i}`, at, 0, 2);
      seg(`b${i}`, at, 16, 18);
      const n = Math.abs(i / parts);
      marks.push(
        <text key={`n${i}`} textAnchor="middle" fontSize="12" fontFamily="DejaVu Sans" fill="#828282"
          transform={vertical ? `translate(13 ${at}) rotate(-90)` : `translate(${at} 12)`}>{n}</text>,
      );
    }
  }
  guides.forEach(g => {
    seg(`g${g}`, g, 0, 18);
    seg(`h${g}`, g + 2, 0, 18);
  });
  if (stops) {
    for (let k = 1; k <= 12; k += 1) {
      const x = Math.round(origin + k * 46.2);
      marks.push(<path key={`s${k}`} d={`M${x - 2} 17.500h5M${x + 0.5} 15v3`} stroke="#777" />);
    }
    marks.push(<path key="indent" d={`M${origin - 6} .5h12l-6 9zM${origin - 6} 17.500v-3l6-5 6 5v3z`} fill="#d0d0d0" stroke="#777" />);
  }
  return (
    <Strip $vertical={vertical}>
      <StripSvg>
        {margin > 0 && (
          <rect width={vertical ? 18 : margin} height={vertical ? margin : 18} fill="#ececec" />
        )}
        {marks}
      </StripSvg>
    </Strip>
  );
}

/* ---------- toolbars ---------- */

type Item = { icon: string; label: string; drop?: boolean; pressed?: boolean; faded?: boolean } | '|' | number;

const Items = ({ list }: { list: Item[] }) => (
  <>
    {list.map((it, i) => {
      if (it === '|') return <Sep key={i} />;
      if (typeof it === 'number') return <Gap key={i} $size={it} />;
      return (
        <React.Fragment key={i}>
          <Tool type="button" aria-label={it.label} $pressed={it.pressed}><Icon name={it.icon} /></Tool>
          {it.drop && <Drop type="button" aria-label={`${it.label} options`} $pressed={it.pressed} $faded={it.faded} />}
        </React.Fragment>
      );
    })}
  </>
);

const standard: Item[] = [
  { icon: 'writer', label: 'New', drop: true }, { icon: 'open', label: 'Open', drop: true },
  { icon: 'save', label: 'Save' }, { icon: 'mail', label: 'E-mail' }, '|',
  { icon: 'edit', label: 'Edit file' }, '|',
  { icon: 'pdf', label: 'Export as PDF' }, { icon: 'print', label: 'Print' }, '|',
  { icon: 'spell', label: 'Spelling' }, { icon: 'autospell', label: 'AutoSpellcheck', pressed: true }, '|',
  { icon: 'cut', label: 'Cut' }, { icon: 'copy', label: 'Copy' }, { icon: 'paste', label: 'Paste' },
  { icon: 'brush', label: 'Clone formatting' }, '|',
  { icon: 'undo', label: 'Undo', drop: true }, { icon: 'redo', label: 'Redo', drop: true, faded: true }, '|',
  { icon: 'ball', label: 'Gallery' }, { icon: 'chain', label: 'Hyperlink' }, '|',
  { icon: 'compass', label: 'Navigator' }, { icon: 'find', label: 'Zoom', drop: true, faded: true }, '|',
  { icon: 'help', label: 'Help' },
];

const drawing: Item[] = [
  { icon: 'pointer', label: 'Select' }, 8,
  { icon: 'line', label: 'Line' }, { icon: 'arrow', label: 'Arrow' }, { icon: 'rect', label: 'Rectangle' },
  { icon: 'ellipse', label: 'Ellipse' }, { icon: 'text', label: 'Text' }, 8,
  { icon: 'pencil', label: 'Curve', drop: true }, { icon: 'connector', label: 'Connector', drop: true },
  { icon: 'line', label: 'Lines and arrows', drop: true }, { icon: 'diamond', label: 'Basic shapes', drop: true },
  { icon: 'smiley', label: 'Symbol shapes', drop: true }, { icon: 'dblArrow', label: 'Block arrows', drop: true },
  { icon: 'flow', label: 'Flowcharts', drop: true }, { icon: 'callout', label: 'Callouts', drop: true },
  { icon: 'star', label: 'Stars', drop: true }, 7,
  { icon: 'points', label: 'Points' }, { icon: 'glue', label: 'Glue points' }, 8,
  { icon: 'fontwork', label: 'Fontwork' }, { icon: 'image', label: 'From file' }, { icon: 'imageOff', label: 'Gallery' }, 8,
  { icon: 'extrude', label: 'Extrusion' },
];

function SheetTab({ width, label, active }: { width: number; label: string; active?: boolean }) {
  return (
    <Tab type="button" role="tab" aria-selected={!!active} $width={width} $active={active}>
      <TabShape width={width} height="15" aria-hidden="true">
        <path d={active ? `M0 .5L7 14.500H${width - 7}L${width} .5` : `M7 .5L0 14.500H${width - 7}L${width} .5z`}
          fill={active ? '#fff' : '#cdcdcd'} stroke="#7d7d7d" />
      </TabShape>
      <TabLabel>{label}</TabLabel>
    </Tab>
  );
}

const navGlyphs = [
  ['First', 'M5.500 5v6M10 5l-3.500 3 3.500 3z'],
  ['Previous', 'M9 5L5.500 8 9 11z'],
  ['Next', 'M6 5l3.500 3L6 11z'],
  ['Last', 'M9.500 5v6M5 5l3.500 3L5 11z'],
];

function EmbeddedDrawing() {
  const dots = [[265.5, 77.5], [435.5, 77.5], [265.5, 176.5], [435.5, 176.5]];
  return (
    <Embedded>
      <svg width="23" height="26" aria-hidden="true"><path d="M9.500 6v14M6 9.500h14" stroke="#000" /></svg>
      <InnerTop>
        <Ruler origin={49} unit={36.92} parts={2} from={-1} to={13} margin={49} guides={[278, 448]} />
        <Cursor $vertical />
      </InnerTop>
      <ScrollV>
        <Room $share={99} /><ThumbBar $share={65} /><Room $share={233} />
      </ScrollV>
      <InnerSide>
        <Ruler vertical origin={45} unit={36.92} parts={2} from={-1} to={8.5} margin={45} guides={[85, 184]} />
        <Cursor />
      </InnerSide>
      <InnerDesk>
        <InnerPage>
          <path d="M36.500 400V36.500H2000" fill="none" stroke="#bdbdbd" />
          <path d="M92 220.500L217 92" stroke="#222" strokeWidth="1.200" />
          <path d="M134 221.500H231.500V290.500H384.500V254.500H424" fill="none" stroke="#3465a4" />
          <ellipse cx="350.500" cy="127" rx="85" ry="50" fill="#6699d1" stroke="#3465a4" />
          {dots.map(([x, y]) => <circle key={`${x}-${y}`} cx={x} cy={y} r="3" fill="#f2494f" stroke="#b32830" />)}
          <g fill="#c4263c" stroke="#eab0b8" strokeWidth=".8">
            <ellipse cx="350.500" cy="77.500" rx="5" ry="3.500" /><ellipse cx="350.500" cy="176.500" rx="5" ry="3.500" />
            <ellipse cx="265.500" cy="126.500" rx="3.500" ry="5" /><ellipse cx="435.500" cy="126.500" rx="3.500" ry="5" />
          </g>
          <g fill="none" stroke="#2b3a4a" strokeWidth="1.200">
            <circle cx="350.500" cy="126.500" r="4.500" />
            <path d="M350.500 119v4M350.500 130v4M343 126.500h4M354 126.500h4" />
          </g>
        </InnerPage>
      </InnerDesk>
      <TabRow role="tablist">
        {navGlyphs.map(([label, d]) => (
          <NavButton key={label} type="button" aria-label={`${label} sheet`}>
            <svg width="15" height="15" aria-hidden="true">
              <rect x="1.500" y="1.500" width="12" height="13" rx="4" fill="#f0f0f0" stroke="#c8c8c8" />
              <path d={d} fill="#c0c0c0" stroke="#c0c0c0" />
            </svg>
          </NavButton>
        ))}
        <SheetTab width={59} label="Layout" active />
        <SheetTab width={69} label="Controls" />
        <SheetTab width={117} label="Dimension Lines" />
        <TabFiller />
        <TabSash />
        <InnerScrollH>
          <Room $share={67} /><ThumbBar $share={43} /><Room $share={88} />
        </InnerScrollH>
      </TabRow>
      <ScrollCorner />
      {['start', 'mid', 'end'].flatMap(x => ['start', 'mid', 'end'].map(y => (
        x === 'mid' && y === 'mid' ? null : <Knob key={x + y} $x={x} $y={y} />
      )))}
    </Embedded>
  );
}

export default function App() {
  return (
    <Window>
      <GlobalStyle />
      <Defs />
      <TitleBar>
        <Lights>
          <Light type="button" aria-label="Close" $tone="#e8413f" $edge="#9a2423" $dot />
          <Light type="button" aria-label="Minimize" $tone="#f5b13b" $edge="#a8721b" />
          <Light type="button" aria-label="Zoom" $tone="#74c655" $edge="#3f8531" />
        </Lights>
        <Title>
          <svg width="14" height="16" viewBox="0 0 14 16" aria-hidden="true">
            <path d="M.5.5h9l4 4v11H.5z" fill="#e6eaf0" stroke="#5b7086" /><path d="M9 .5h4.500V5z" fill="#5b7086" />
            <path d="M3 5.500h5M3 7.500h8M3 9.500h8M3 11.500h6" stroke="#5b7086" />
          </svg>
          Untitled 2.odt
        </Title>
        <Expand type="button" aria-label="Full screen">
          <svg width="14" height="14" aria-hidden="true">
            <path d="M7 0h7v7l-2-2-3 3-3-3 3-3zM0 7l2 2 2-2 3 3-2 2 2 2H0z" fill="#6f6f6f" stroke="#e2e2e2" strokeWidth=".5" />
          </svg>
        </Expand>
      </TitleBar>

      <Toolbars>
        <Row $height={34} role="toolbar" aria-label="Standard"><Grip /><Items list={standard} /></Row>
        <Row $height={36} role="toolbar" aria-label="Drawing object properties">
          <Grip />
          <Items list={[
            { icon: 'badge', label: 'Properties' }, '|',
            { icon: 'lineStyle', label: 'Line' }, { icon: 'lineEnds', label: 'Arrow style', drop: true }, 12,
          ]} />
          <SelectWrap $width={80}>
            <Select aria-label="Line style"><option aria-label="Continuous" /></Select>
            <LinePreview />
          </SelectWrap>
          <Gap $size={19} />
          <WidthInput aria-label="Line width" defaultValue="0,00 cm" />
          <Stepper>
            <Step type="button" aria-label="Increase" />
            <Step type="button" aria-label="Decrease" $down />
          </Stepper>
          <Gap $size={9} />
          <Items list={[{ icon: 'lineColor', label: 'Line color', drop: true }, '|', { icon: 'bucket', label: 'Area' }]} />
          <FillGroup>
            <SelectWrap $width={72}>
              <Select aria-label="Fill type"><option>Color</option></Select>
            </SelectWrap>
            <SelectWrap $width={112}>
              <Select aria-label="Fill color" $indent={42}><option>Tango:</option></Select>
              <Swatch />
            </SelectWrap>
          </FillGroup>
          <Items list={[
            { icon: 'shadow', label: 'Shadow' }, '|', 1,
            { icon: 'rotate', label: 'Effects', drop: true, pressed: true },
            { icon: 'align', label: 'Align', drop: true }, { icon: 'arrange', label: 'Arrange', drop: true },
          ]} />
        </Row>
      </Toolbars>

      <Main>
        <PagesPanel>
          <PanelHead>
            <PanelTitle>Pages</PanelTitle>
            <PanelClose type="button" aria-label="Close panel">
              <svg width="10" height="10" aria-hidden="true"><path d="M1.500 1.500l7 7M8.500 1.500l-7 7" stroke="#444" strokeWidth="2" /></svg>
            </PanelClose>
          </PanelHead>
          <PageList>
            <PageItem type="button">
              <PageNumber>1</PageNumber>
              <Thumb aria-hidden="true">
                <path d="M21 49L48 21" stroke="#222" strokeWidth="1.200" />
                <path d="M30 49.500H51.500V64.500H84.500V56.500H93" fill="none" stroke="#4a7ab5" />
                <ellipse cx="77" cy="29" rx="19" ry="11" fill="#6699d1" stroke="#3465a4" />
              </Thumb>
            </PageItem>
          </PageList>
        </PagesPanel>
        <Splitter />
        <Editor>
          <Corner><svg width="8" height="7" aria-hidden="true"><path d="M1 0v5h6" fill="none" stroke="#888" strokeWidth="2" /></svg></Corner>
          <TopRulerCell>
            <Ruler origin={73} unit={93.75} parts={8} from={-0.75} to={6} margin={73} stops />
          </TopRulerCell>
          <ScrollV>
            <Room $share={97} /><ThumbBar $share={320} /><Room $share={200} />
          </ScrollV>
          <SideRulerCell>
            <Ruler vertical origin={-83} unit={93.75} parts={8} from={1} to={7.125} />
          </SideRulerCell>
          <Desk>
            <Paper>
              <Formula>
                <Fraction><span>α</span><span>β</span></Fraction>
                , β<Upright>≠0</Upright>
              </Formula>
              <EmbeddedDrawing />
            </Paper>
          </Desk>
          <EditorScrollH>
            <Room $share={1} /><ThumbBar $share={764} /><Room $share={37} />
          </EditorScrollH>
          <ScrollCorner />
        </Editor>
        <Splitter />
        <SideBar>
          <SideTool type="button" aria-label="Sidebar settings"><Icon name="menu" /></SideTool>
          <SideRule />
          <SideTool type="button" aria-label="Properties" $framed><Icon name="spanner" /></SideTool>
          <SideTool type="button" aria-label="Styles"><Icon name="badge" /></SideTool>
          <SideTool type="button" aria-label="Gallery"><Icon name="gallery" /></SideTool>
          <SideTool type="button" aria-label="Navigator"><Icon name="compass" /></SideTool>
        </SideBar>
      </Main>

      <DrawBar $height={36} role="toolbar" aria-label="Drawing"><Grip $tone="#ccc" /><Items list={drawing} /></DrawBar>

      <Status>
        <Cell>Shape selected</Cell>
        <Measures $pad={10}>
          <Measure>
            <svg width="14" height="12" aria-hidden="true">
              <path d="M0 3.500h8M3.500 0v8" stroke="#3a2aa0" strokeDasharray="2 1" /><path d="M3.500 3.500h10v7h-10z" fill="none" stroke="#222" strokeDasharray="1 1" />
            </svg>
            6,20 / 1,10
          </Measure>
          <Measure>
            <svg width="15" height="12" aria-hidden="true">
              <path d="M5.500 3.500h8v7h-8z" fill="none" stroke="#222" strokeDasharray="1 1" />
              <path d="M1.500 3v8M5 1h9" stroke="#000" strokeWidth="1.500" strokeDasharray="2 1" />
            </svg>
            4,60 x 2,70
          </Measure>
        </Measures>
        <Cell $pad={6}>
          <svg width="12" height="12" aria-hidden="true">
            <path d="M.5.500h8v10h-8z" fill="#f6f6f6" stroke="#999" />
            <path d="M8.500 3v6M6 4.500l5 3M11 4.500l-5 3" stroke="#d8202c" strokeWidth="1.200" />
          </svg>
        </Cell>
        <Cell />
        <Cell>Slide 1 / 1 (Layout)</Cell>
        <Cell>Default</Cell>
        <Cell />
        <Cell />
      </Status>
    </Window>
  );
}
